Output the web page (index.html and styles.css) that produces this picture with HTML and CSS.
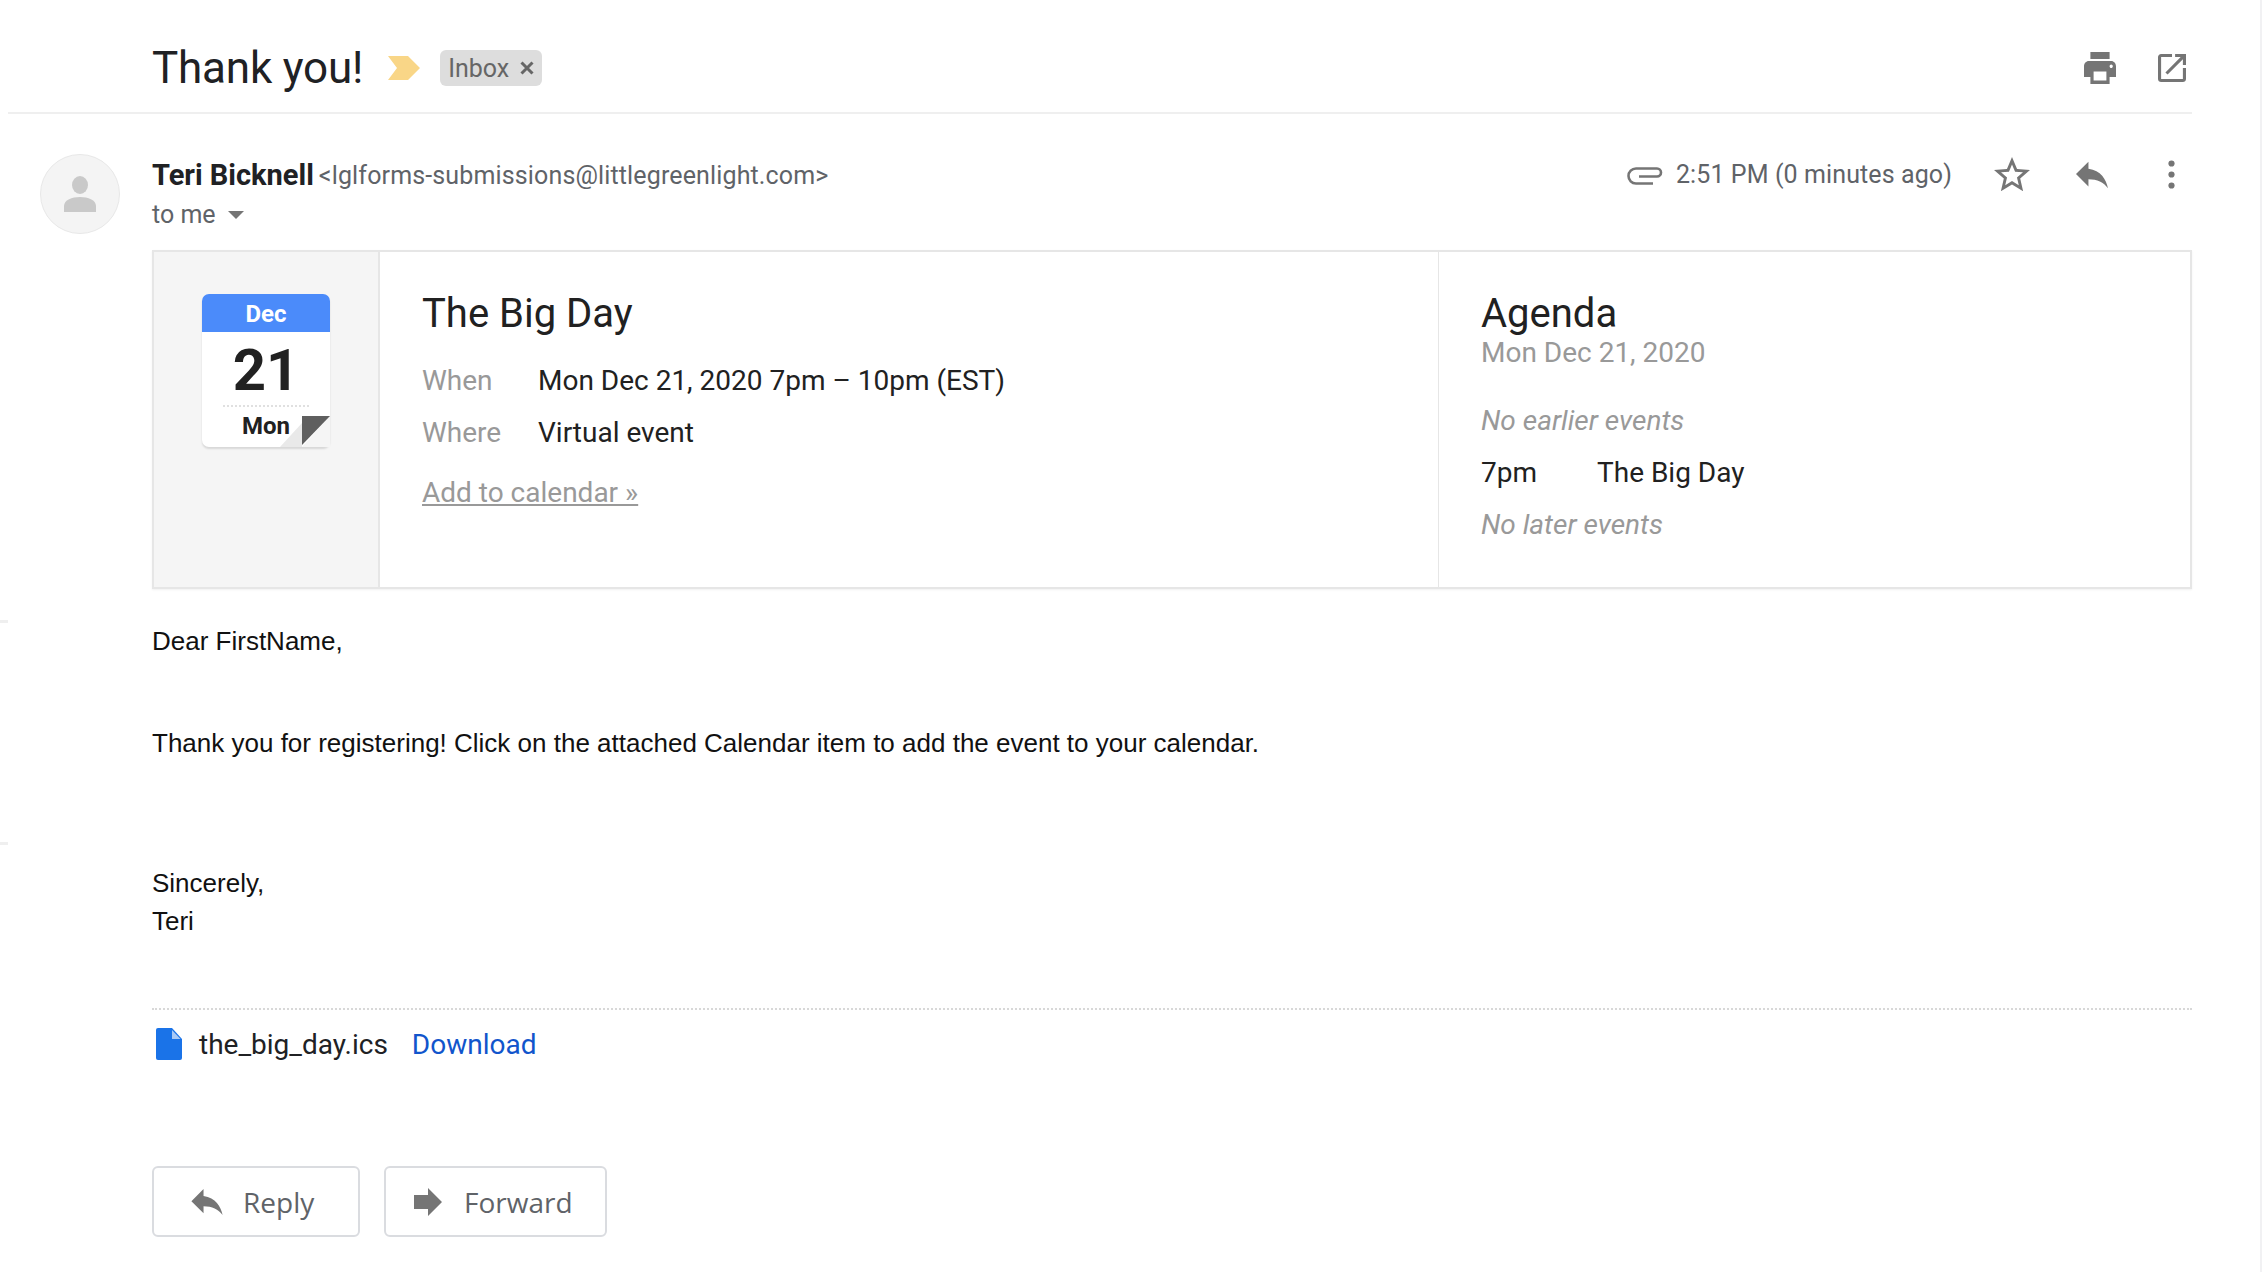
FILE: index.html
```html
<!DOCTYPE html>
<html lang="en">
<head>
    <meta charset="UTF-8">
    <title>Thank you!</title>
    <link rel="stylesheet" href="styles.css">
</head>
<body>
<div class="page">
    <span class="edge-mark edge-mark-a"></span>
    <span class="edge-mark edge-mark-b"></span>
    <div class="subject-bar">
        <h1 class="subject">Thank you!</h1>
        <svg class="marker" width="32" height="24" viewBox="0 0 32 24"><path d="M0 0H20L32 12 20 24H0L9 12z" fill="#f9d687"/></svg>
        <span class="label">Inbox <svg width="14" height="14" viewBox="0 0 14 14"><path d="M1.500 1.500L12.500 12.500M12.500 1.500L1.500 12.500" stroke="#666" stroke-width="3" fill="none"/></svg></span>
        <div class="top-icons">
            <svg width="32" height="32" viewBox="2 3 20 18" preserveAspectRatio="none"><path d="M19 8H5c-1.66 0-3 1.34-3 3v6h4v4h12v-4h4v-6c0-1.66-1.34-3-3-3zm-3 11H8v-5h8v5zm3-7c-.55 0-1-.45-1-1s.45-1 1-1 1 .45 1 1-.45 1-1 1zm-1-9H6v4h12V3z" fill="#757575"/></svg>
            <svg width="28" height="28" viewBox="3 3 18 18"><path d="M19 19H5V5h7V3H5c-1.11 0-2 .9-2 2v14c0 1.1.89 2 2 2h14c1.100 0 2-.9 2-2v-7h-2v7zM14 3v2h3.590l-9.830 9.830 1.410 1.410L19 6.410V10h2V3h-7z" fill="#757575"/></svg>
        </div>
    </div>

    <div class="message">
        <div class="avatar">
            <svg width="32" height="36" viewBox="0 0 32 36"><ellipse cx="16" cy="9" rx="8" ry="9" fill="#c9c9c9"/><path d="M0 36V30C0 24 8 21 16 21s16 3 16 9v6z" fill="#c9c9c9"/></svg>
        </div>
        <div class="message-main">
            <div class="sender-row">
                <div class="sender">
                    <div><b class="name">Teri Bicknell</b> <span class="email">&lt;lglforms-submissions@littlegreenlight.com&gt;</span></div>
                    <div class="to">to me <span class="caret"></span></div>
                </div>
                <div class="meta">
                    <svg class="clip" width="36" height="18" viewBox="0 0 36 18"><path d="M26 16.500H9A7.500 7.500 0 0 1 9 1.500H30a4 4 0 0 1 0 8H12" fill="none" stroke="#757575" stroke-width="2.600"/></svg>
                    <span class="time">2:51 PM (0 minutes ago)</span>
                    <svg class="star" width="36" height="36" viewBox="2 2 20 20"><path d="M22 9.240l-7.190-.62L12 2 9.190 8.630 2 9.240l5.460 4.730L5.820 21 12 17.270 18.180 21l-1.630-7.030L22 9.240zM12 15.400l-3.760 2.270 1-4.280-3.320-2.880 4.380-.38L12 6.100l1.710 4.040 4.380.38-3.320 2.880 1 4.280L12 15.400z" fill="#757575"/></svg>
                    <svg class="reply" width="32" height="28" viewBox="3 5 18 15"><path d="M10 9V5l-7 7 7 7v-4.100c5 0 8.500 1.600 11 5.100-1-5-4-10-11-11z" fill="#757575"/></svg>
                    <svg class="more" width="7" height="29" viewBox="0 0 7 29"><circle cx="3.500" cy="3.500" r="3.100" fill="#757575"/><circle cx="3.500" cy="14.500" r="3.100" fill="#757575"/><circle cx="3.500" cy="25.500" r="3.100" fill="#757575"/></svg>
                </div>
            </div>

            <div class="invite">
                <div class="invite-date">
                    <div class="cal">
                        <div class="cal-month">Dec</div>
                        <div class="cal-day">21</div>
                        <div class="cal-week">Mon</div>
                        <svg class="cal-fold" width="50" height="31" viewBox="0 0 50 31"><path d="M50 0V31H22z" fill="#f5f5f5"/><path d="M0 31L22 7V31z" fill="#e9e9e9"/><path d="M22 0H50L22 29z" fill="#5f5f5f"/></svg>
                    </div>
                </div>
                <div class="invite-info">
                    <h2 class="invite-title">The Big Day</h2>
                    <div class="info-row"><span class="info-key">When</span><span>Mon Dec 21, 2020 7pm – 10pm (EST)</span></div>
                    <div class="info-row"><span class="info-key">Where</span><span>Virtual event</span></div>
                    <a class="add-link" href="#">Add to calendar »</a>
                </div>
                <div class="agenda">
                    <h2 class="invite-title agenda-title">Agenda</h2>
                    <div class="agenda-date">Mon Dec 21, 2020</div>
                    <div class="agenda-none">No earlier events</div>
                    <div class="agenda-event"><span class="agenda-time">7pm</span><span>The Big Day</span></div>
                    <div class="agenda-none">No later events</div>
                </div>
            </div>

            <div class="body-text">
                <p class="greeting">Dear FirstName,</p>
                <p class="thanks">Thank you for registering! Click on the attached Calendar item to add the event to your calendar.</p>
                <p class="sign">Sincerely,<br>Teri</p>
            </div>

            <div class="attachment">
                <svg width="26" height="32" viewBox="0 0 26 32"><path d="M2 0H16L26 11V30a2 2 0 0 1-2 2H2a2 2 0 0 1-2-2V2a2 2 0 0 1 2-2z" fill="#1a73e8"/><path d="M16 2V11H24.500z" fill="#a9c9f5"/></svg>
                <span class="file-name">the_big_day.ics</span>
                <a class="download" href="#">Download</a>
            </div>

            <div class="actions">
                <a class="btn btn-reply" href="#">
                    <svg width="32" height="26" viewBox="3 5 18 15"><path d="M10 9V5l-7 7 7 7v-4.100c5 0 8.500 1.600 11 5.100-1-5-4-10-11-11z" fill="#757575"/></svg>
                    Reply
                </a>
                <a class="btn btn-forward" href="#">
                    <svg width="28" height="28" viewBox="0 0 28 28"><path d="M0 7H14V0L28 14 14 28V21H0z" fill="#757575"/></svg>
                    Forward
                </a>
            </div>
        </div>
    </div>
</div>
</body>
</html>
```

FILE: styles.css
```css
html,body{margin:0;padding:0;background:#fff;}
body{font-family:Roboto,"Liberation Sans",sans-serif;color:#202124;overflow:hidden;}
h1,h2,p{margin:0;font-weight:400;}
a{text-decoration:none;}

.page{position:relative;width:2262px;height:1272px;box-sizing:border-box;padding-right:68px;border-right:2px solid #f1f1f3;overflow:hidden;}
.edge-mark{position:absolute;left:0;width:8px;height:3px;background:#efefef;}
.edge-mark-a{top:620px;}
.edge-mark-b{top:842px;}

/* subject */
.subject-bar{display:flex;align-items:center;height:88px;padding:24px 0 0 144px;margin-left:8px;border-bottom:2px solid #efefef;}
.subject{font-size:44px;font-weight:400;line-height:60px;letter-spacing:-.2px;}
.marker{margin-left:25px;}
.label{display:inline-flex;align-items:center;height:36px;padding:0 8px;margin-left:20px;border-radius:6px;background:#dddddd;color:#666;font-size:25px;gap:11px;}
.top-icons{display:flex;align-items:center;gap:42px;margin-left:auto;margin-right:6px;}

/* message */
.message{display:flex;padding-top:40px;padding-left:40px;}
.avatar{flex:none;width:78px;height:78px;border-radius:50%;background:#f4f4f4;border:1px solid #e8e8e8;display:flex;align-items:center;justify-content:center;}
.message-main{flex:1;margin-left:32px;}

.sender-row{display:flex;justify-content:space-between;height:96px;box-sizing:border-box;padding-top:4px;}
.name{font-size:29px;font-weight:700;}
.email{font-size:25px;color:#5f6368;letter-spacing:.14px;margin-left:1px;vertical-align:1px;}
.to{font-size:25px;color:#5f6368;margin-top:8px;display:flex;align-items:center;gap:12px;}
.caret{width:0;height:0;border-left:8px solid transparent;border-right:8px solid transparent;border-top:8px solid #757575;}
.meta{display:flex;align-items:flex-start;margin-right:17px;}
.meta svg{flex:none;}
.clip{margin-top:9px;}
.time{font-size:25px;color:#5f6368;margin-left:13px;line-height:34px;letter-spacing:.1px;}
.star{margin-left:42px;margin-top:-1px;}
.reply{margin-left:46px;margin-top:3px;}
.more{margin-left:60px;margin-top:2px;}

/* calendar invite */
.invite{display:flex;height:335px;border:2px solid #e6e6e6;box-shadow:0 1px 2px rgba(0,0,0,.06);}
.invite-date{flex:none;width:224px;background:#f5f5f5;border-right:2px solid #e6e6e6;}
.cal{position:relative;width:128px;height:153px;margin:42px 0 0 48px;background:#fff;border-radius:7px;box-shadow:0 2px 2px rgba(0,0,0,.12);text-align:center;}
.cal-month{height:38px;line-height:40px;background:#4b8bfa;color:#fff;font-size:24px;font-weight:700;border-radius:7px 7px 0 0;}
.cal-day{height:73px;line-height:76px;margin:0 21px;font-size:58px;font-weight:700;color:#212121;border-bottom:2px dotted #e0e0e0;}
.cal-week{font-size:24px;font-weight:700;color:#212121;line-height:38px;}
.cal-fold{position:absolute;right:0;bottom:0;}

.invite-info{flex:none;width:1059px;box-sizing:border-box;padding:37px 0 0 42px;border-right:1px solid #e6e6e6;font-size:28px;}
.invite-title{font-size:40px;line-height:50px;color:#212121;}
.info-row{display:flex;line-height:52px;color:#212121;}
.info-row:first-of-type{margin-top:16px;}
.info-key{width:116px;color:#999;}
.add-link{display:inline-block;margin-top:14px;color:#999;text-decoration:underline;font-size:28px;line-height:40px;}

.agenda{flex:1;padding:37px 0 0 42px;font-size:28px;}
.agenda-date{color:#999;line-height:30px;margin-top:-1px;}
.agenda-none{color:#999;font-style:italic;line-height:52px;}
.agenda-date + .agenda-none{margin-top:27px;}
.agenda-event{display:flex;line-height:52px;color:#212121;}
.agenda-time{width:116px;}

/* body */
.body-text{font-family:"Liberation Sans",Arial,sans-serif;font-size:26px;color:#111;line-height:38px;padding-top:33px;height:421px;box-sizing:border-box;border-bottom:2px dotted #d8d8d8;}
.greeting{margin-bottom:64px;}
.thanks{margin-bottom:102px;}

.attachment{display:flex;align-items:center;height:68px;padding-left:4px;font-size:28px;}
.file-name{margin-left:17px;color:#202124;}
.download{margin-left:24px;color:#1155cc;}

.actions{display:flex;gap:24px;margin-top:88px;}
.btn{display:flex;align-items:center;height:71px;box-sizing:border-box;border:2px solid #dadce0;border-radius:6px;color:#5f6368;font-family:"Open Sans",Roboto,sans-serif;font-size:28px;font-weight:500;background:#fff;}
.btn-reply{width:208px;padding-left:37px;gap:20px;}
.btn-forward{width:223px;padding-left:28px;gap:22px;}
```
